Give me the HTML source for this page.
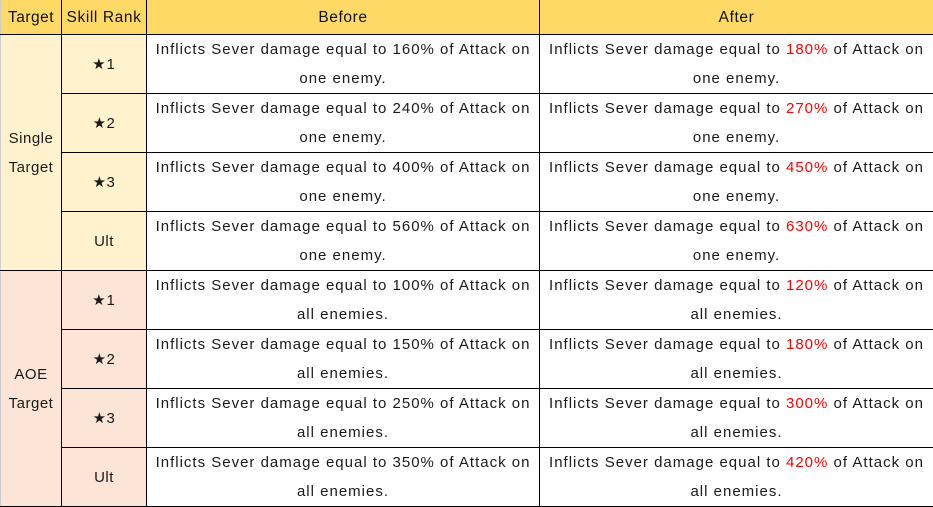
<!DOCTYPE html>
<html><head><style>
body{margin:0;width:933px;height:507px;overflow:hidden;background:#fff;font-family:"Liberation Sans",sans-serif;}
table{position:absolute;left:0;top:0;border-collapse:collapse;table-layout:fixed;width:933px;}
td,th{border:1px solid #000;font-size:15px;letter-spacing:1px;color:#1a1a1a;text-align:center;padding:0 3px;line-height:29px;font-weight:normal;}
th{background:#ffd966;height:34px;letter-spacing:0.6px;font-size:15.5px;color:#111;}
tr.r td{height:58px;}
.s{background:#fff2cc;}
.a{background:#fce4d6;}
.red{color:#f00;}
table tr:first-child th{border-top:none;}
td:first-child,th:first-child{border-left:1px solid #ccc;letter-spacing:0.5px;}
</style></head><body>
<table>
<colgroup><col style="width:61px"><col style="width:85px"><col style="width:393px"><col style="width:394px"></colgroup>
<tr><th>Target</th><th>Skill Rank</th><th>Before</th><th>After</th></tr>
<tr class="r"><td class="s" rowspan="4">Single<br>Target</td><td class="s">★1</td><td>Inflicts Sever damage equal to 160% of Attack on one enemy.</td><td>Inflicts Sever damage equal to <span class="red">180%</span> of Attack on one enemy.</td></tr>
<tr class="r"><td class="s">★2</td><td>Inflicts Sever damage equal to 240% of Attack on one enemy.</td><td>Inflicts Sever damage equal to <span class="red">270%</span> of Attack on one enemy.</td></tr>
<tr class="r"><td class="s">★3</td><td>Inflicts Sever damage equal to 400% of Attack on one enemy.</td><td>Inflicts Sever damage equal to <span class="red">450%</span> of Attack on one enemy.</td></tr>
<tr class="r"><td class="s">Ult</td><td>Inflicts Sever damage equal to 560% of Attack on one enemy.</td><td>Inflicts Sever damage equal to <span class="red">630%</span> of Attack on one enemy.</td></tr>
<tr class="r"><td class="a" rowspan="4">AOE<br>Target</td><td class="a">★1</td><td>Inflicts Sever damage equal to 100% of Attack on all enemies.</td><td>Inflicts Sever damage equal to <span class="red">120%</span> of Attack on all enemies.</td></tr>
<tr class="r"><td class="a">★2</td><td>Inflicts Sever damage equal to 150% of Attack on all enemies.</td><td>Inflicts Sever damage equal to <span class="red">180%</span> of Attack on all enemies.</td></tr>
<tr class="r"><td class="a">★3</td><td>Inflicts Sever damage equal to 250% of Attack on all enemies.</td><td>Inflicts Sever damage equal to <span class="red">300%</span> of Attack on all enemies.</td></tr>
<tr class="r"><td class="a">Ult</td><td>Inflicts Sever damage equal to 350% of Attack on all enemies.</td><td>Inflicts Sever damage equal to <span class="red">420%</span> of Attack on all enemies.</td></tr>
</table>
</body></html>
